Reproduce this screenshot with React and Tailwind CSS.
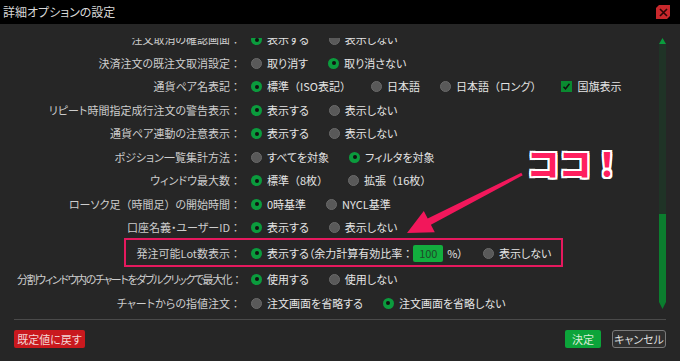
import React from "react";

const rows = [
  { label: "注文取消の確認画面：", opts: [["表示する", true], ["表示しない", false]] },
  { label: "決済注文の既注文取消設定：", opts: [["取り消す", false], ["取り消さない", true]] },
  { label: "通貨ペア名表記：", opts: [["標準（ISO表記）", true], ["日本語", false], ["日本語（ロング）", false]], flag: true },
  { label: "リピート時間指定成行注文の警告表示：", opts: [["表示する", true], ["表示しない", false]] },
  { label: "通貨ペア連動の注意表示：", opts: [["表示する", true], ["表示しない", false]] },
  { label: "ポジション一覧集計方法：", opts: [["すべてを対象", false], ["フィルタを対象", true]] },
  { label: "ウィンドウ最大数：", opts: [["標準（8枚）", true], ["拡張（16枚）", false]] },
  { label: "ローソク足（時間足）の開始時間：", opts: [["0時基準", true], ["NYCL基準", false]] },
  { label: "口座名義・ユーザーID：", opts: [["表示する", true], ["表示しない", false]] },
];

const rowsAfter = [
  {
    label: "分割ウィンドウ内のチャートをダブルクリックで最大化：",
    opts: [["使用する", true], ["使用しない", false]],
    h: "h-[24.5px]",
    tight: true,
  },
  { label: "チャートからの指値注文：", opts: [["注文画面を省略する", false], ["注文画面を省略しない", true]] },
];

// full-width brackets and colons keep their em width, the rest stays proportional
function FW({ text }) {
  return text.split(/([（）：])/).map((p, i) =>
    /[（）：]/.test(p) ? (
      <span key={i} className="[font-feature-settings:normal]">
        {p}
      </span>
    ) : (
      p
    )
  );
}

function Radio({ on }) {
  if (on) {
    return (
      <span className="w-[11px] h-[11px] shrink-0 rounded-full bg-[#0b9b3d] flex items-center justify-center">
        <span className="w-[4px] h-[4px] rounded-full bg-[#111]" />
      </span>
    );
  }
  return <span className="w-[11px] h-[11px] shrink-0 rounded-full bg-[#595959] border border-[#6a6a6a]" />;
}

function Option({ text, on }) {
  return (
    <div className="flex items-center gap-[5px]">
      <Radio on={on} />
      <span className="text-[#e4e4e4]">
        <FW text={text} />
      </span>
    </div>
  );
}

function Row({ label, children, h = "h-[23.5px]", extra, tight }) {
  return (
    <div className={`relative flex items-center ${h}`}>
      <div className="w-[227px] shrink-0 flex justify-end whitespace-nowrap text-[#cdcdcd]">
        <span className={tight ? "tracking-[-1.4px]" : ""}>
          <FW text={label} />
        </span>
      </div>
      <div className="ml-[10px] flex items-center gap-5 whitespace-nowrap">{children}</div>
      {extra}
    </div>
  );
}

export default function App() {
  return (
    <div className="relative w-[680px] h-[361px] bg-[#262626] overflow-hidden font-['Noto_Sans_CJK_JP',sans-serif] text-[11px] [font-feature-settings:'palt']">
      {/* title bar */}
      <div className="h-6 bg-black flex items-center justify-between pl-[3px] pr-[10px]">
        <span className="text-[12px] text-[#d8d8d8]">詳細オプションの設定</span>
        <div className="w-[14px] h-[14px] bg-[#c8282c] flex items-center justify-center [clip-path:polygon(3px_0,100%_0,100%_calc(100%-3px),calc(100%-3px)_100%,0_100%,0_3px)]">
          <svg width="9" height="9" viewBox="0 0 9 9">
            <path d="M1 1l7 7M8 1L1 8" stroke="#2a0606" strokeWidth="1.6" />
          </svg>
        </div>
      </div>

      {/* options */}
      <div className="flex px-[14px] pt-[14px]">
        <div className="flex-1 h-[277px] overflow-hidden">
          <div className="mt-[-10.25px]">
            {rows.map((r) => (
              <Row key={r.label} label={r.label}>
                {r.opts.map(([t, on]) => (
                  <Option key={t} text={t} on={on} />
                ))}
                {r.flag && (
                  <div className="flex items-center gap-[5px]">
                    <span className="w-[11px] h-[11px] bg-[#0a8a30] flex items-center justify-center">
                      <svg width="9" height="9" viewBox="0 0 9 9">
                        <path d="M1.5 4.8l2 2 4-5" fill="none" stroke="#111" strokeWidth="1.5" />
                      </svg>
                    </span>
                    <span className="text-[#e4e4e4]">国旗表示</span>
                  </div>
                )}
              </Row>
            ))}

            <Row
              label="発注可能Lot数表示："
              h="h-[27.5px]"
              extra={<div className="absolute left-[110px] top-[-1px] w-[439px] h-[29px] border-2 border-[#e5195e]" />}
            >
              <div className="flex items-center gap-[5px]">
                <Radio on />
                <span className="text-[#e4e4e4] flex items-center">
                  表示する（余力計算有効比率<span className="[font-feature-settings:normal]">：</span>
                  <span className="w-[30px] h-[17px] rounded-[2px] bg-[#12ae3e] text-[#1f4a2a] flex items-center justify-center">
                    100
                  </span>
                  <span className="ml-[4px]">%）</span>
                </span>
              </div>
              <Option text="表示しない" on={false} />
            </Row>

            {rowsAfter.map((r) => (
              <Row key={r.label} label={r.label} h={r.h} tight={r.tight}>
                {r.opts.map(([t, on]) => (
                  <Option key={t} text={t} on={on} />
                ))}
              </Row>
            ))}
          </div>
        </div>

        {/* scrollbar */}
        <div className="w-[7px] h-[271px] flex flex-col">
          <svg width="7" height="6" viewBox="0 0 7 6">
            <polygon points="3.5,0 7,6 0,6" fill="#0a9c3c" />
          </svg>
          <div className="flex-1 bg-[#1f3326] flex flex-col justify-end">
            <div className="h-[88px] bg-[#0b7d2e]" />
          </div>
          <svg width="7" height="7" viewBox="0 0 7 7">
            <polygon points="0,0 7,0 3.5,7" fill="#0a7d2e" />
          </svg>
        </div>
      </div>

      <div className="mx-[14px] mt-1 border-t border-[#4a4a4a]" />

      {/* buttons */}
      <div className="flex items-center justify-between px-[14px] pt-[10px]">
        <button className="w-[71px] h-[18px] rounded-[2px] bg-[#c9191e] text-[#f3d6d6] text-[11px] flex items-center justify-center">
          既定値に戻す
        </button>
        <div className="flex items-center gap-[11px]">
          <button className="w-[36px] h-[18px] rounded-[2px] bg-[#0ca43a] text-[#d9ecd9] text-[11px] flex items-center justify-center">
            決定
          </button>
          <button className="w-[54px] h-[18px] rounded-[3px] bg-[#2f2f2f] border border-[#7a7a7a] text-[#dcdcdc] text-[11px] flex items-center justify-center">
            キャンセル
          </button>
        </div>
      </div>

      {/* annotation */}
      <svg className="absolute inset-0 pointer-events-none" width="680" height="361">
        <polygon
          points="521.3,172.7 522.7,175.3 430.9,224.7 434.8,232.3 407,233 423.8,210.9 427.7,218.5"
          fill="#f2175b"
        />
      </svg>
      <div className="absolute left-[527px] top-[146px] text-[32px] leading-none font-black text-[#ff1f5f] [font-feature-settings:normal] [text-shadow:2px_0_0_#fff,-2px_0_0_#fff,0_2px_0_#fff,0_-2px_0_#fff,2px_2px_0_#fff,-2px_-2px_0_#fff,2px_-2px_0_#fff,-2px_2px_0_#fff]">
        ココ！
      </div>
    </div>
  );
}
